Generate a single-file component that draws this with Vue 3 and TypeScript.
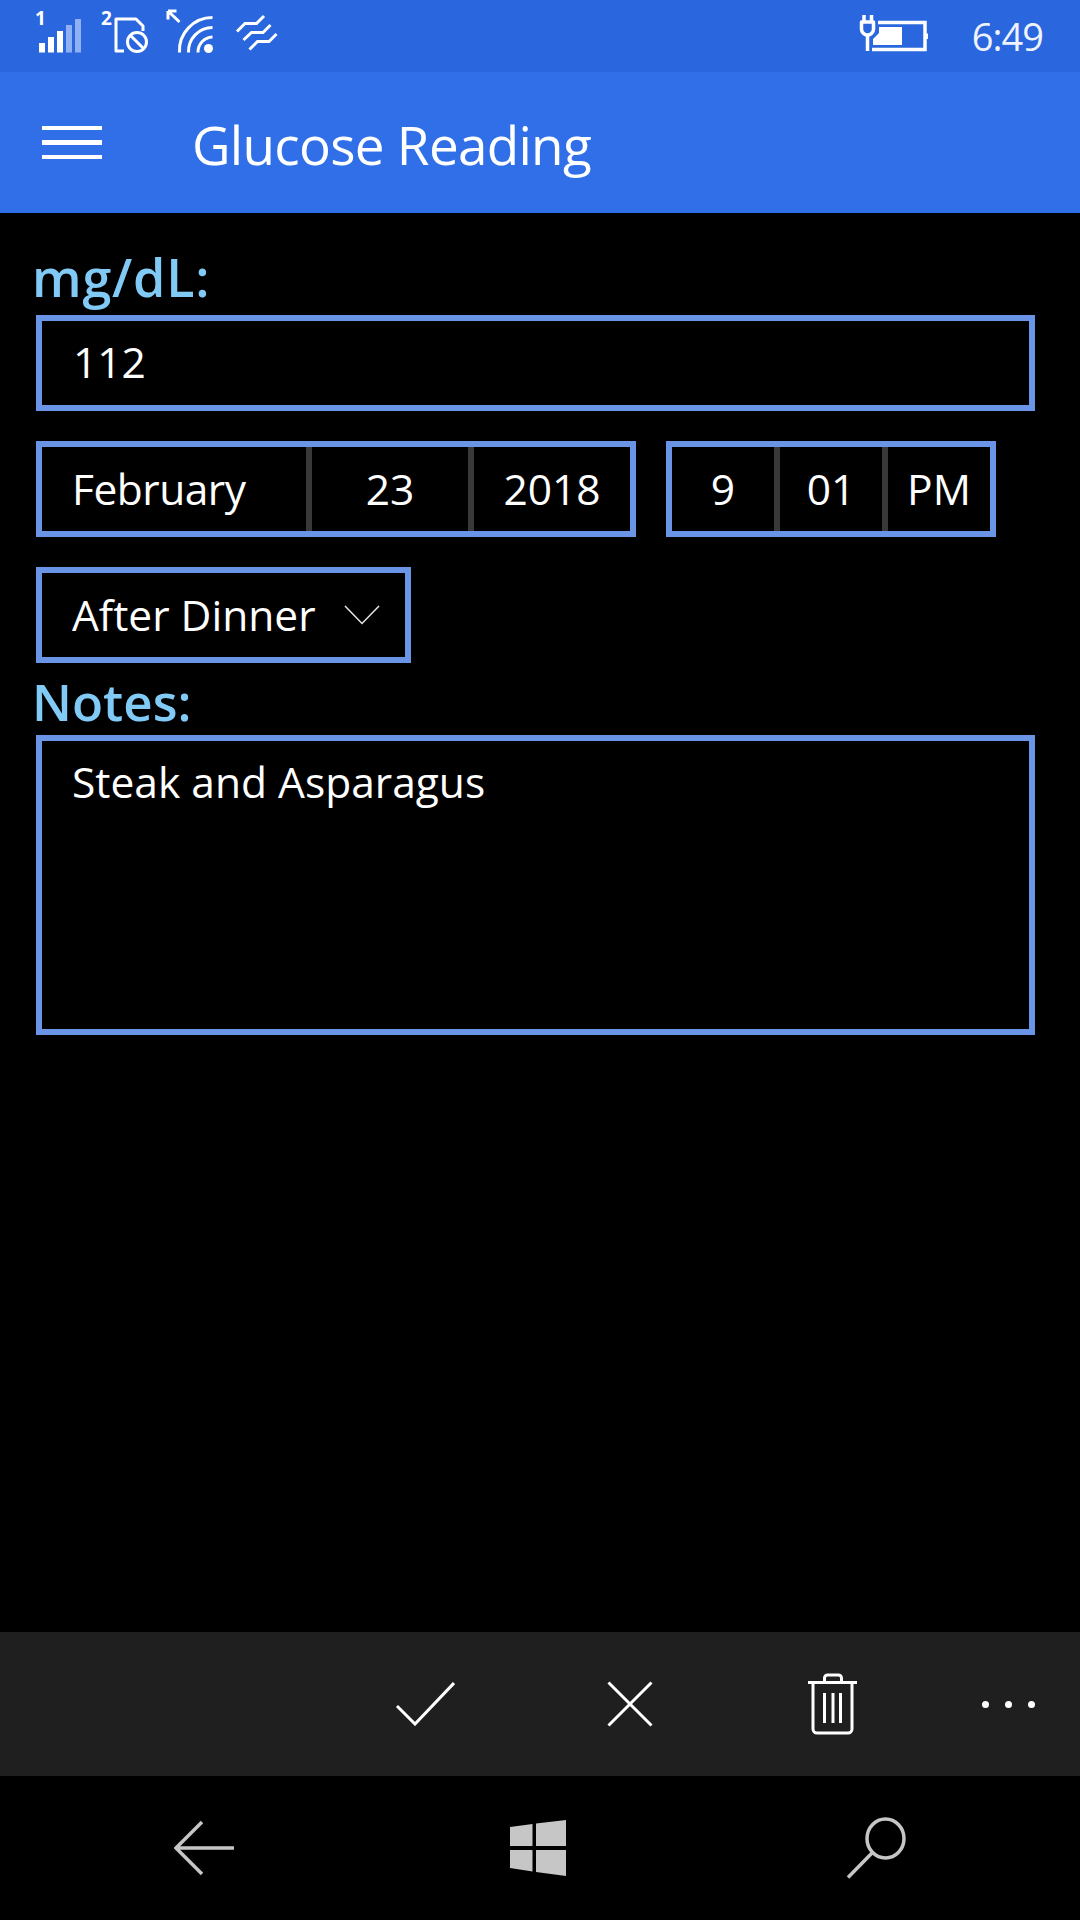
<script setup lang="ts">
const bars = [
  { x: 39, y: 43, dim: false },
  { x: 48, y: 37, dim: false },
  { x: 57, y: 31, dim: false },
  { x: 66, y: 25, dim: true },
  { x: 75, y: 19, dim: true },
]
const dateParts = [
  { text: 'February', cls: 'month' },
  { text: '23', cls: 'day' },
  { text: '2018', cls: 'year' },
]
const timeParts = [
  { text: '9', cls: 'hour' },
  { text: '01', cls: 'minute' },
  { text: 'PM', cls: 'ampm' },
]
</script>

<template>
  <div class="phone">
    <div class="status">
      <svg class="ico-signal" width="64" height="72" viewBox="30 0 64 72">
        <text x="35" y="25" class="tiny">1</text>
        <rect v-for="b in bars" :key="b.x" :x="b.x" :y="b.y" width="6" :height="52.5 - b.y" :fill="b.dim ? '#8fb0f2' : '#fff'" />
      </svg>
      <svg class="ico-sim" width="56" height="72" viewBox="100 0 56 72" fill="none" stroke="#fff" stroke-width="3">
        <text x="101" y="25" class="tiny" stroke="none">2</text>
        <path d="M124 51H116V19H136L143 26V31" stroke-linejoin="round" />
        <circle cx="137" cy="42" r="9.5" />
        <path d="M130.5 35.5L143.5 48.5" />
      </svg>
      <svg class="ico-wifi" width="56" height="72" viewBox="164 0 56 72" fill="none" stroke="#fff" stroke-width="3">
        <path d="M168 11H176.5M168 11V19.5M168.5 11.5L179.5 22" stroke-width="3" />
        <path d="M179.5 52.5A33 33 0 0 1 212.5 17.5M188.5 52.5A24 24 0 0 1 212.5 27.5M198 52.5A15 15 0 0 1 212.5 37" />
        <circle cx="208.5" cy="48.5" r="4.5" fill="#fff" stroke="none" />
      </svg>
      <svg class="ico-waves" width="48" height="72" viewBox="234 0 48 72" fill="none" stroke="#fff" stroke-width="3">
        <path d="M237 31.5L245 23.5H256.5L264 16M243.5 40L251.500 32.500H263L270.500 25M249.500 49.500L257.500 41.500H269L276.500 34" />
      </svg>
      <div class="status-right">
        <svg class="ico-batt" width="70" height="72" viewBox="856 0 70 72" fill="none" stroke="#fff" stroke-width="3.500">
          <path d="M862 15V22M869.500 15V22" />
          <path d="M859.500 22V29A6 6 0 0 0 871.500 29V22Z" stroke-linejoin="round" />
          <path d="M865.500 35V51" />
          <path d="M876 22.500H923V49.500H870" />
          <path d="M925 33.500V39" stroke-width="3" />
          <path d="M877 27H900V45H871V39L877 33Z" fill="#fff" stroke="none" />
        </svg>
        <span class="clock">6:49</span>
      </div>
    </div>

    <header class="titlebar">
      <div class="burger"><i></i><i></i><i></i></div>
      <h1 class="title">Glucose Reading</h1>
    </header>

    <main class="form">
      <label class="caption first">mg/dL:</label>
      <div class="box input"><span>112</span></div>

      <div class="pickers">
        <div class="box picker date">
          <span v-for="p in dateParts" :key="p.text" class="cell" :class="p.cls">{{ p.text }}</span>
        </div>
        <div class="box picker time">
          <span v-for="p in timeParts" :key="p.text" class="cell" :class="p.cls">{{ p.text }}</span>
        </div>
      </div>

      <div class="box combo">
        <span>After Dinner</span>
        <svg width="36" height="20" viewBox="0 0 36 20" fill="none" stroke="#e8e8e8" stroke-width="1.500">
          <path d="M1 1L18 18.500L35 1" />
        </svg>
      </div>

      <label class="caption notes-label">Notes:</label>
      <div class="box notes"><span>Steak and Asparagus</span></div>
    </main>

    <div class="appbar">
      <svg class="a-check" width="60" height="44" viewBox="395 1682 60 44" fill="none" stroke="#fff" stroke-width="3">
        <path d="M397 1706L415 1724L454 1683" />
      </svg>
      <svg class="a-close" width="46" height="46" viewBox="607 1681 46 46" fill="none" stroke="#fff" stroke-width="3">
        <path d="M608.500 1682.500L651.500 1725.500M651.500 1682.500L608.500 1725.500" />
      </svg>
      <svg class="a-trash" width="50" height="62" viewBox="808 1673 50 62" fill="none" stroke="#fff" stroke-width="3">
        <path d="M808 1682.500H857" />
        <path d="M824.500 1682V1678A3 3 0 0 1 827.500 1675H838.500A3 3 0 0 1 841.500 1678V1682" />
        <path d="M813 1682V1729A4 4 0 0 0 817 1733H848A4 4 0 0 0 852 1729V1682" />
        <path d="M824.500 1693V1723M833 1693V1723M840.500 1693V1723" />
      </svg>
      <div class="more"><i></i><i></i><i></i></div>
    </div>

    <nav class="navbar">
      <svg class="n-back" width="62" height="56" viewBox="174 1820 62 56" fill="none" stroke="#c6c6c6" stroke-width="3.500">
        <path d="M234 1848H176M202 1822L176 1848L202 1874" />
      </svg>
      <svg class="n-win" width="56" height="56" viewBox="510 1818 56 56" fill="#c6c6c6">
        <path d="M510 1825L532.500 1822V1844H510ZM536 1821.500L566 1818V1844H536ZM510 1848H532.500V1869.500L510 1866ZM536 1848H566V1874L536 1870Z" />
      </svg>
      <svg class="n-search" width="60" height="62" viewBox="846 1817 60 62" fill="none" stroke="#c6c6c6" stroke-width="3.500">
        <ellipse cx="885.500" cy="1838.500" rx="18.500" ry="19.500" />
        <path d="M872 1853L848 1877.500" />
      </svg>
    </nav>
  </div>
</template>

<style>
html,
body {
  margin: 0;
  background: #000;
}
</style>

<style scoped>
.phone {
  width: 1080px;
  height: 1920px;
  display: flex;
  flex-direction: column;
  background: #000;
  color: #fff;
  font-family: "Open Sans", "Noto Sans", sans-serif;
  overflow: hidden;
}
.status {
  height: 72px;
  background: #2a66dd;
  display: flex;
  align-items: center;
  padding-left: 30px;
}
.status svg {
  display: block;
  flex: none;
}
.ico-sim { margin-left: 6px; }
.ico-wifi { margin-left: 8px; }
.ico-waves { margin-left: 14px; }
.tiny {
  font: 700 19px "Open Sans", sans-serif;
  fill: #fff;
}
.status-right {
  margin-left: auto;
  display: flex;
  align-items: center;
  padding-right: 37px;
}
.clock {
  margin-left: 44px;
  font-size: 38px;
  font-weight: 400;
  color: #eef3fd;
  letter-spacing: -1px;
}
.titlebar {
  height: 141px;
  background: #316fe8;
  display: flex;
  align-items: center;
  padding-left: 42px;
}
.burger {
  width: 60px;
  display: flex;
  flex-direction: column;
  gap: 10px;
}
.burger i {
  display: block;
  height: 4.500px;
  background: #fff;
}
.title {
  margin: 4px 0 0 90px;
  font-size: 53px;
  font-weight: 400;
  letter-spacing: -0.7px;
  line-height: 1;
}
.form {
  flex: 1;
  display: flex;
  flex-direction: column;
  align-items: flex-start;
  padding-left: 36px;
}
.caption {
  font-size: 51px;
  font-weight: 600;
  color: #82caf6;
  line-height: 60px;
  height: 60px;
  display: block;
  margin-left: -4px;
}
.caption.first {
  font-size: 52px;
  letter-spacing: 0.8px;
  margin-top: 34px;
  margin-bottom: 8px;
}
.notes-label {
  margin-top: 8px;
  margin-bottom: 4px;
}
.box {
  box-sizing: border-box;
  border: 6px solid #6a94e6;
  background: #000;
  font-size: 42.500px;
  font-weight: 400;
  line-height: 1;
  display: flex;
}
.input {
  width: 999px;
  height: 96px;
  align-items: center;
  padding: 0 0 2px 31px;
}
.pickers {
  display: flex;
  gap: 30px;
  margin-top: 30px;
}
.picker {
  height: 96px;
  align-items: stretch;
}
.cell {
  box-sizing: border-box;
  display: flex;
  align-items: center;
  justify-content: center;
  border-left: 6px solid #383838;
}
.cell:first-child { border-left: 0; }
.date { width: 600px; }
.time { width: 330px; }
.month { width: 264px; justify-content: flex-start; padding-left: 30px; letter-spacing: -0.5px; }
.day { width: 162px; }
.year { width: 162px; }
.hour { width: 102px; }
.minute { width: 108px; }
.ampm { width: 108px; }
.combo {
  width: 375px;
  height: 96px;
  margin-top: 30px;
  align-items: center;
  justify-content: space-between;
  padding: 0 25px 0 30px;
}
.notes {
  width: 999px;
  height: 300px;
  padding: 20px 0 0 30px;
}
.appbar {
  height: 144px;
  background: #1f1f1f;
  display: flex;
  align-items: center;
  padding-left: 395px;
}
.a-close { margin-left: 152px; }
.a-trash { margin-left: 155px; }
.more {
  margin-left: 124px;
  display: flex;
  gap: 16px;
}
.more i {
  display: block;
  width: 7px;
  height: 7px;
  border-radius: 50%;
  background: #fff;
}
.navbar {
  height: 144px;
  display: flex;
  align-items: center;
  padding-left: 174px;
}
.navbar svg { flex: none; }
.n-win { margin-left: 274px; }
.n-search { margin-left: 280px; }
</style>
